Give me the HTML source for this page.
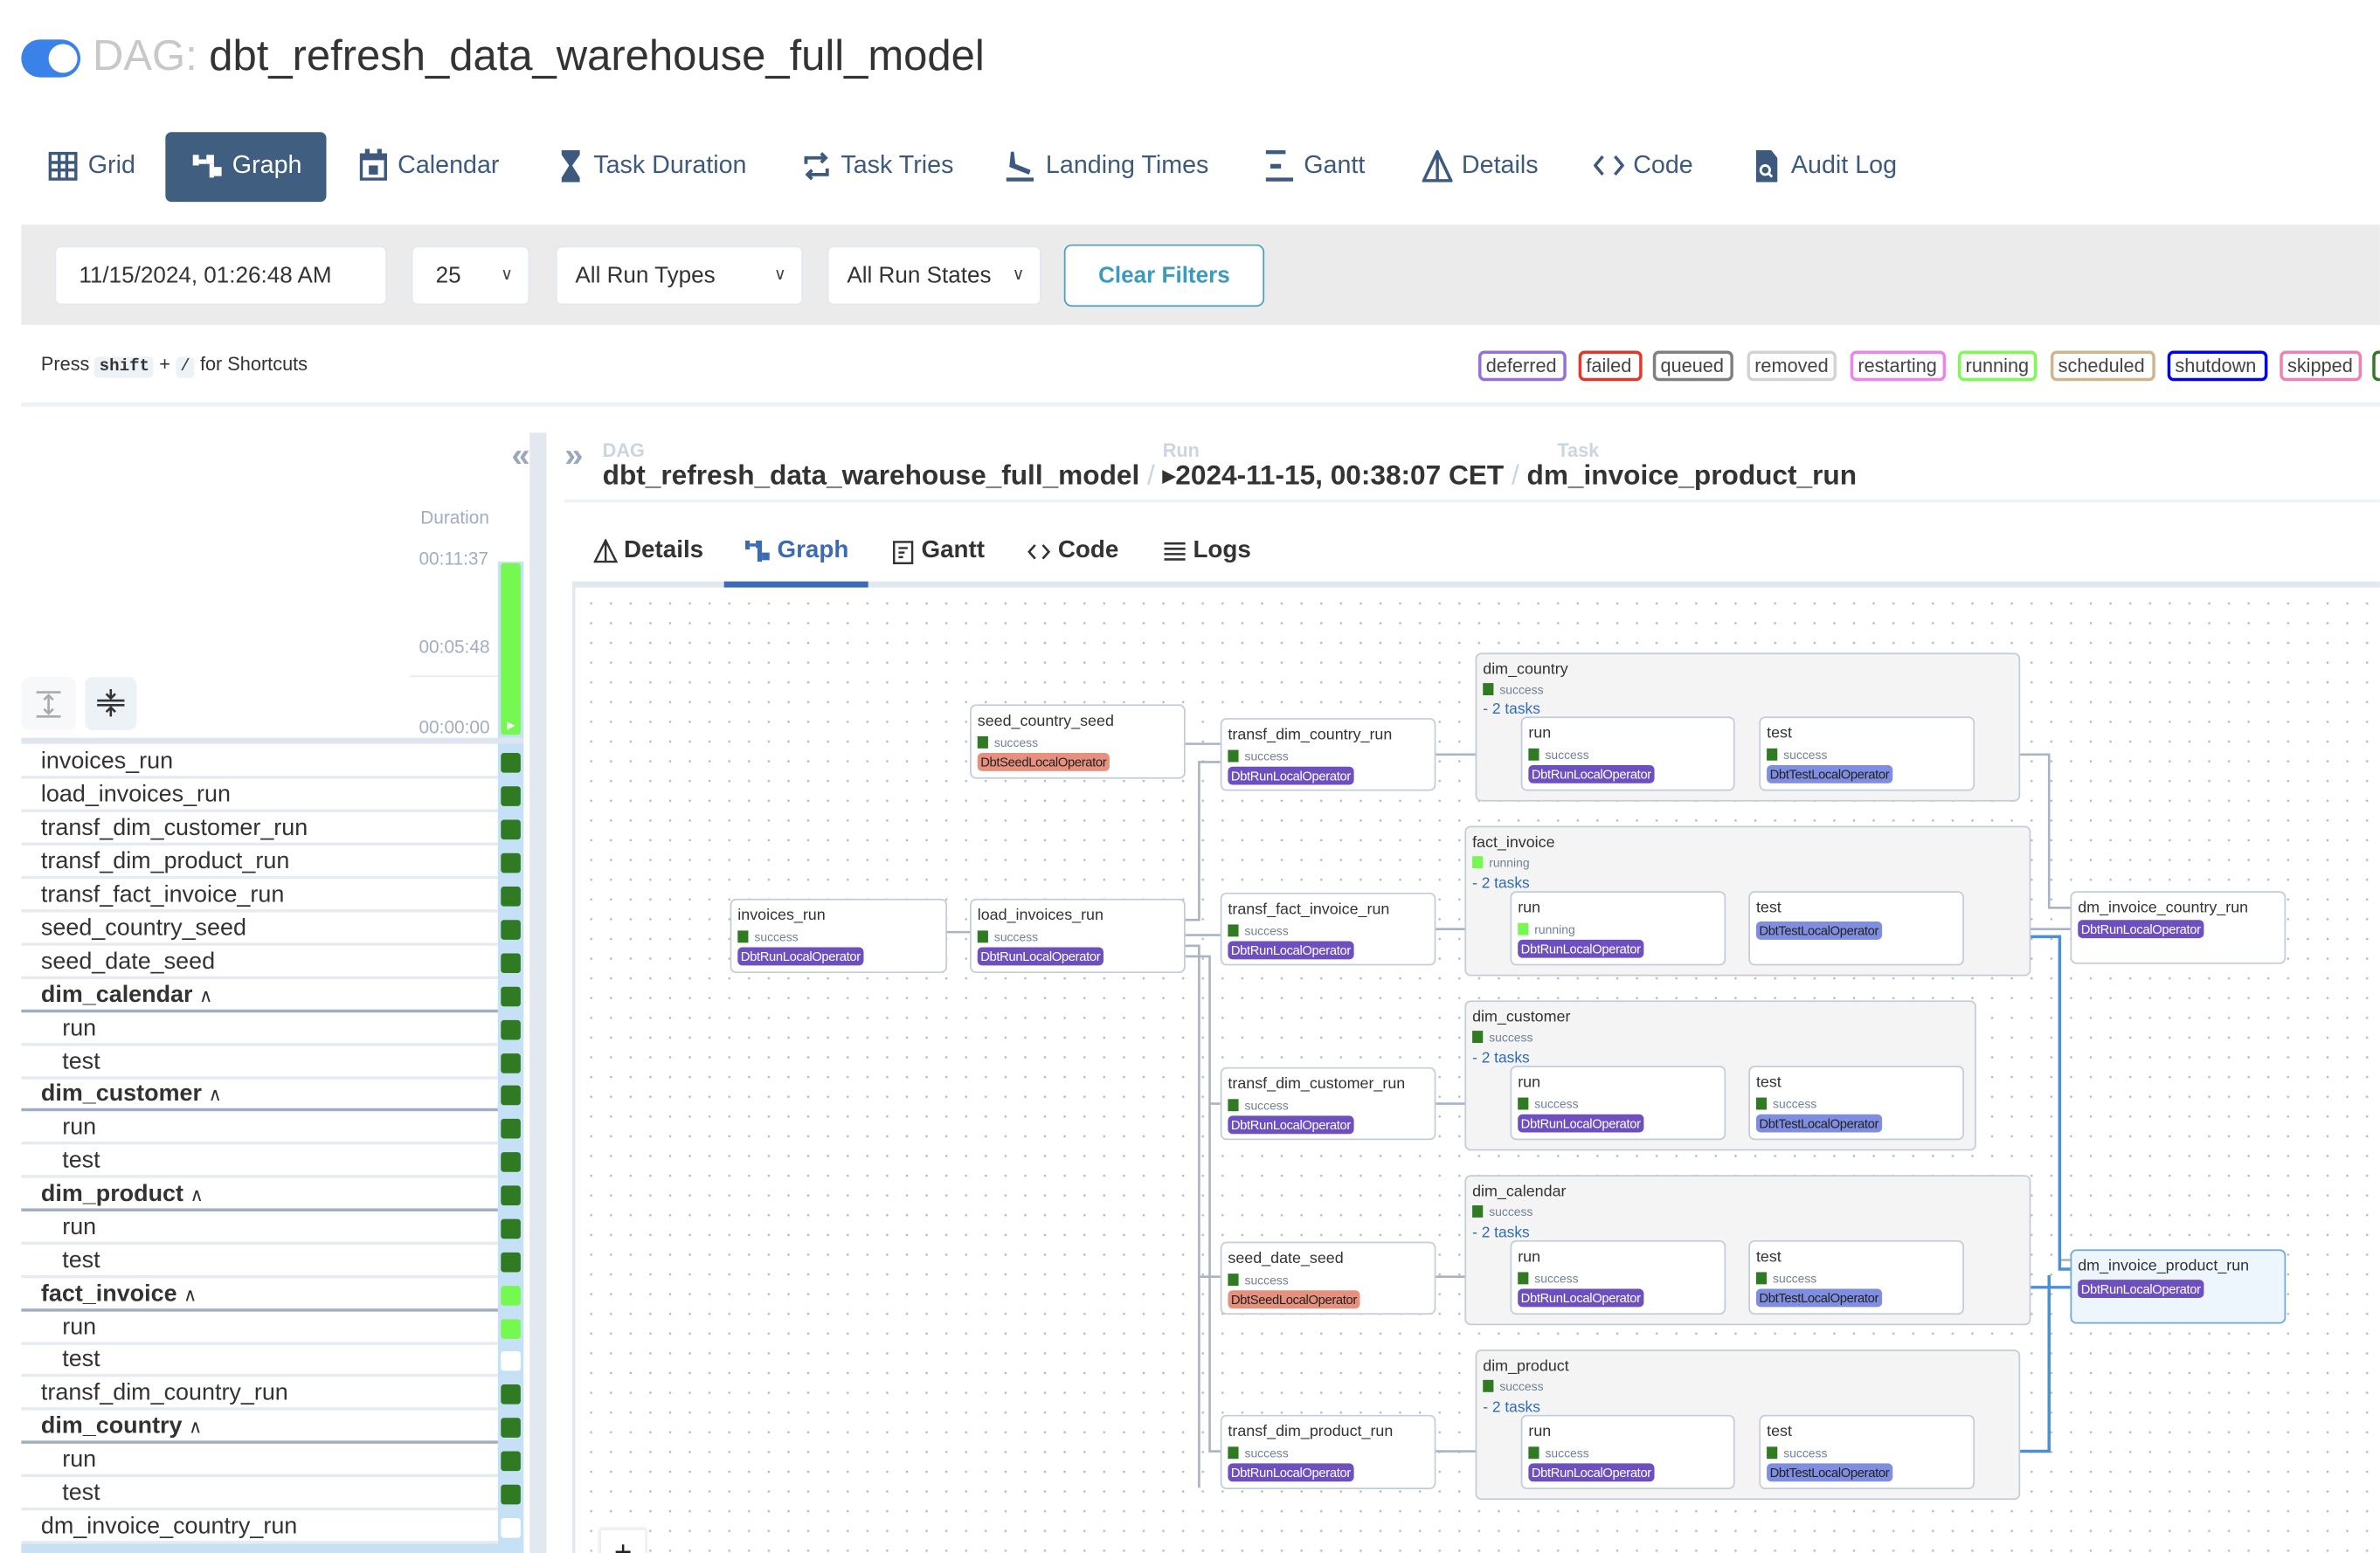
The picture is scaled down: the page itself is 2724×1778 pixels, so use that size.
<!DOCTYPE html>
<html><head><meta charset="utf-8">
<style>
*{box-sizing:border-box;margin:0;padding:0}
html,body{width:2724px;height:1778px;overflow:hidden;background:#fff;font-family:"Liberation Sans",Arial,sans-serif;color:#333}
#s{position:absolute;left:0;top:0;width:1568px;height:1023px;transform:scale(1.7372,1.738);transform-origin:0 0;overflow:hidden}
.a{position:absolute;white-space:nowrap}
.nav{color:#3d5a7e;font-size:16.5px}
.inp{position:absolute;top:162px;height:39px;background:#fff;border:1px solid #e2e8f0;border-radius:4px;font-size:15px;color:#333;line-height:37px;padding-left:15px}
.chev{position:absolute;right:10px;top:0;font-size:11px;color:#444}
.lg{position:absolute;top:231px;height:20px;border:2px solid;border-radius:4px;font-size:12.5px;color:#444;line-height:16px;padding:0 3px;background:#fff}
.row{position:absolute;left:14px;width:314px;height:22px;border-bottom:2px solid #e6ebf1;font-size:15.5px;line-height:21px;color:#333}
.row.b{font-weight:bold;border-bottom:2px solid #a0aec0}
.sq{position:absolute;left:330px;width:13px;height:13px;border-radius:2px;background:#2f7a22}
.n{position:absolute;background:#fff;border:1px solid #c3ccd8;border-radius:4px}
.g{position:absolute;background:#f4f4f4;border:1px solid #c3ccd8;border-radius:4px}
.nm{position:absolute;left:4px;top:5px;font-size:10.3px;color:#333}
.st{position:absolute;left:4px;font-size:8px;color:#718096}
.st i{display:inline-block;width:7px;height:8px;background:#2f7a22;margin-right:4px;vertical-align:-1px}
.bd{position:absolute;left:4px;height:12px;line-height:12px;font-size:8.5px;color:#fff;background:#6d4fbf;border-radius:3px;padding:0 2px;letter-spacing:-.2px}
.bd.t{background:#7f8ee0;color:#222}
.bd.s{background:#e8907e;color:#222}
.tk{position:absolute;left:4px;font-size:10px;color:#2f6bb5}
.tab{position:absolute;top:354px;font-size:16px;font-weight:bold;color:#333}
</style></head><body><div id="s">
<!-- header -->
<div class="a" style="left:14px;top:26px;width:39px;height:25px;border-radius:13px;background:#3b82e8"></div>
<div class="a" style="left:32px;top:29px;width:19px;height:19px;border-radius:50%;background:#fff"></div>
<div class="a" style="left:61px;top:20px;font-size:28.2px;color:#333"><span style="color:#c8c8c8">DAG:</span> dbt_refresh_data_warehouse_full_model</div>

<div class="a" style="left:109px;top:87px;width:106px;height:46px;background:#3f5e80;border-radius:4px"></div>
<svg class="a" style="left:32px;top:100px" width="19" height="19" viewBox="0 0 19 19" fill="none" stroke="#3d5a7e" stroke-width="2"><rect x="1" y="1" width="17" height="17"/><path d="M7 1v17M12 1v17M1 7h17M1 12h17"/></svg>
<div class="a nav" style="left:58px;top:100px">Grid</div>
<svg class="a" style="left:127px;top:100px" width="20" height="19" viewBox="0 0 20 19" fill="#fff"><rect x="0" y="2" width="4" height="7"/><rect x="4" y="5" width="5" height="3"/><rect x="9" y="2" width="5" height="6"/><rect x="11" y="8" width="3" height="9"/><rect x="14" y="10" width="5" height="6"/></svg>
<div class="a nav" style="left:153px;top:100px;color:#fff">Graph</div>
<svg class="a" style="left:237px;top:98px" width="18" height="21" viewBox="0 0 18 21" fill="none" stroke="#3d5a7e" stroke-width="2"><rect x="1" y="4" width="16" height="16"/><path d="M1 6h16M5 0v5M13 0v5" stroke-width="3"/><rect x="7" y="12" width="4" height="4" fill="#3d5a7e"/></svg>
<div class="a nav" style="left:262px;top:100px">Calendar</div>
<svg class="a" style="left:369px;top:99px" width="14" height="21" viewBox="0 0 14 21" fill="#3d5a7e"><path d="M1 0h12v3L8 10l5 8v3H1v-3l5-8L1 3z"/></svg>
<div class="a nav" style="left:391px;top:100px">Task Duration</div>
<svg class="a" style="left:529px;top:99px" width="18" height="21" viewBox="0 0 18 21" fill="none" stroke="#3d5a7e" stroke-width="2.2"><path d="M2 9V5h13M12 2l3 3-3 3M16 12v4H3M6 13l-3 3 3 3"/></svg>
<div class="a nav" style="left:554px;top:100px">Task Tries</div>
<svg class="a" style="left:662px;top:99px" width="20" height="21" viewBox="0 0 20 21" fill="#3d5a7e"><path d="M4 1l2 0 1 8 10 4-1 3L3 11z"/><rect x="1" y="18" width="18" height="2.5"/></svg>
<div class="a nav" style="left:689px;top:100px">Landing Times</div>
<svg class="a" style="left:833px;top:99px" width="20" height="21" viewBox="0 0 20 21" fill="#3d5a7e"><rect x="1" y="0" width="13" height="2.5"/><rect x="4" y="9" width="7" height="3"/><rect x="1" y="18" width="18" height="2.5"/></svg>
<div class="a nav" style="left:859px;top:100px">Gantt</div>
<svg class="a" style="left:937px;top:99px" width="20" height="21" viewBox="0 0 20 21" fill="none" stroke="#3d5a7e" stroke-width="2"><path d="M10 1L1 20h18zM10 1v19"/></svg>
<div class="a nav" style="left:963px;top:100px">Details</div>
<svg class="a" style="left:1050px;top:101px" width="20" height="16" viewBox="0 0 20 16" fill="none" stroke="#3d5a7e" stroke-width="2"><path d="M6 2L1 8l5 6M14 2l5 6-5 6"/></svg>
<div class="a nav" style="left:1076px;top:100px">Code</div>
<svg class="a" style="left:1156px;top:99px" width="16" height="21" viewBox="0 0 16 21"><path d="M1 0h10l4 5v16H1z" fill="#3d5a7e"/><circle cx="7" cy="13" r="3" fill="none" stroke="#fff" stroke-width="1.6"/><path d="M9 15l2.5 2.5" stroke="#fff" stroke-width="1.6"/></svg>
<div class="a nav" style="left:1180px;top:100px">Audit Log</div>

<!-- filter bar -->
<div class="a" style="left:14px;top:148px;width:1554px;height:66px;background:#ebebeb"></div>
<div class="inp" style="left:36px;width:219px">11/15/2024, 01:26:48 AM</div>
<div class="inp" style="left:271px;width:78px">25<span class="chev">&#x2228;</span></div>
<div class="inp" style="left:366px;width:163px;padding-left:12px">All Run Types<span class="chev">&#x2228;</span></div>
<div class="inp" style="left:545px;width:141px;padding-left:12px">All Run States<span class="chev">&#x2228;</span></div>
<div class="a" style="left:701px;top:161px;width:132px;height:41px;border:1.5px solid #4aa0c0;border-radius:5px;background:#fff;color:#3a9ac0;font-weight:bold;font-size:15px;line-height:40px;text-align:center">Clear Filters</div>

<div class="a" style="left:27px;top:233px;font-size:12.5px;color:#333">Press <span style="background:#edf2f7;border-radius:3px;padding:1px 3px;font-family:'Liberation Mono',monospace;font-size:11px;font-weight:bold">shift</span> + <span style="background:#edf2f7;border-radius:3px;padding:1px 3px;font-family:'Liberation Mono',monospace;font-size:11px">/</span> for Shortcuts</div>
<div class="lg" style="left:974px;width:58px;border-color:#9370db">deferred</div>
<div class="lg" style="left:1040px;width:42px;border-color:#e8352a">failed</div>
<div class="lg" style="left:1089px;width:53px;border-color:#808080">queued</div>
<div class="lg" style="left:1151px;width:59px;border-color:#d3d3d3">removed</div>
<div class="lg" style="left:1219px;width:63px;border-color:#ee82ee">restarting</div>
<div class="lg" style="left:1290px;width:52px;border-color:#7cfc50">running</div>
<div class="lg" style="left:1351px;width:69px;border-color:#d2b48c">scheduled</div>
<div class="lg" style="left:1428px;width:66px;border-color:#0000ff">shutdown</div>
<div class="lg" style="left:1502px;width:54px;border-color:#f080b0">skipped</div>
<div class="lg" style="left:1563px;width:20px;border-color:#2f7a22"></div>
<div class="a" style="left:14px;top:265px;width:1554px;height:3px;background:#edf2f7"></div>

<!-- left panel -->
<div class="a" style="left:337px;top:287px;font-size:22px;color:#9aa8bc;font-weight:bold">&laquo;</div>
<div class="a" style="left:277px;top:334px;font-size:12px;color:#a0aec0">Duration</div>
<div class="a" style="left:276px;top:361px;font-size:12px;color:#a0aec0">00:11:37</div>
<div class="a" style="left:276px;top:419px;font-size:12px;color:#a0aec0">00:05:48</div>
<div class="a" style="left:276px;top:472px;font-size:12px;color:#a0aec0">00:00:00</div>
<div class="a" style="left:270px;top:445px;width:58px;height:1px;background:#e6ebf1"></div>
<div class="a" style="left:328px;top:370px;width:17px;height:653px;background:#c6e0f5"></div>
<div class="a" style="left:330px;top:371px;width:13px;height:113px;background:#75f84f;border-radius:2px"></div>
<div class="a" style="left:334px;top:474px;font-size:7px;color:#fff">&#9654;</div>
<div class="a" style="left:14px;top:446px;width:36px;height:35px;background:#f6f8fa;border-radius:5px"></div>
<svg class="a" style="left:23px;top:455px" width="18" height="18" viewBox="0 0 18 18" stroke="#aaa" stroke-width="1.5" fill="none"><path d="M1 1h16M1 17h16M9 3v12M6 6l3-3 3 3M6 12l3 3 3-3"/></svg>
<div class="a" style="left:56px;top:446px;width:34px;height:35px;background:#edf2f7;border-radius:5px"></div>
<svg class="a" style="left:63px;top:453px" width="20" height="20" viewBox="0 0 20 20" stroke="#333" stroke-width="1.5" fill="none"><path d="M1 8.5h18M1 11.5h18M10 1v6M7 4l3 3 3-3M10 19v-6M7 16l3-3 3 3"/></svg>
<div class="a" style="left:14px;top:486px;width:331px;height:4px;background:#dde5ee"></div>

<div class="row" style="top:491px;padding-left:13px">invoices_run</div><div class="sq" style="top:496px"></div>
<div class="row" style="top:513px;padding-left:13px">load_invoices_run</div><div class="sq" style="top:518px"></div>
<div class="row" style="top:535px;padding-left:13px">transf_dim_customer_run</div><div class="sq" style="top:540px"></div>
<div class="row" style="top:557px;padding-left:13px">transf_dim_product_run</div><div class="sq" style="top:562px"></div>
<div class="row" style="top:579px;padding-left:13px">transf_fact_invoice_run</div><div class="sq" style="top:584px"></div>
<div class="row" style="top:601px;padding-left:13px">seed_country_seed</div><div class="sq" style="top:606px"></div>
<div class="row" style="top:623px;padding-left:13px">seed_date_seed</div><div class="sq" style="top:628px"></div>
<div class="row b" style="top:645px;padding-left:13px">dim_calendar <span style="font-weight:normal;font-size:12px">&#x2227;</span></div><div class="sq" style="top:650px"></div>
<div class="row" style="top:667px;padding-left:27px">run</div><div class="sq" style="top:672px"></div>
<div class="row" style="top:689px;padding-left:27px">test</div><div class="sq" style="top:694px"></div>
<div class="row b" style="top:710px;padding-left:13px">dim_customer <span style="font-weight:normal;font-size:12px">&#x2227;</span></div><div class="sq" style="top:715px"></div>
<div class="row" style="top:732px;padding-left:27px">run</div><div class="sq" style="top:737px"></div>
<div class="row" style="top:754px;padding-left:27px">test</div><div class="sq" style="top:759px"></div>
<div class="row b" style="top:776px;padding-left:13px">dim_product <span style="font-weight:normal;font-size:12px">&#x2227;</span></div><div class="sq" style="top:781px"></div>
<div class="row" style="top:798px;padding-left:27px">run</div><div class="sq" style="top:803px"></div>
<div class="row" style="top:820px;padding-left:27px">test</div><div class="sq" style="top:825px"></div>
<div class="row b" style="top:842px;padding-left:13px">fact_invoice <span style="font-weight:normal;font-size:12px">&#x2227;</span></div><div class="sq" style="top:847px;background:#75f84f"></div>
<div class="row" style="top:864px;padding-left:27px">run</div><div class="sq" style="top:869px;background:#75f84f"></div>
<div class="row" style="top:885px;padding-left:27px">test</div><div class="sq" style="top:890px;background:#fff"></div>
<div class="row" style="top:907px;padding-left:13px">transf_dim_country_run</div><div class="sq" style="top:912px"></div>
<div class="row b" style="top:929px;padding-left:13px">dim_country <span style="font-weight:normal;font-size:12px">&#x2227;</span></div><div class="sq" style="top:934px"></div>
<div class="row" style="top:951px;padding-left:27px">run</div><div class="sq" style="top:956px"></div>
<div class="row" style="top:973px;padding-left:27px">test</div><div class="sq" style="top:978px"></div>
<div class="row" style="top:995px;padding-left:13px">dm_invoice_country_run</div><div class="sq" style="top:1000px;background:#fff"></div>
<div class="a" style="left:14px;top:1017px;width:331px;height:10px;background:#c6e0f5"></div>

<div class="a" style="left:349px;top:285px;width:11px;height:738px;background:#e2e8f0"></div>

<!-- right header -->
<div class="a" style="left:372px;top:287px;font-size:22px;color:#9aa8bc;font-weight:bold">&raquo;</div>
<div class="a" style="left:397px;top:290px;font-size:12.5px;color:#cbd5e0;font-weight:bold">DAG</div>
<div class="a" style="left:766px;top:290px;font-size:12.5px;color:#cbd5e0;font-weight:bold">Run</div>
<div class="a" style="left:1026px;top:290px;font-size:12.5px;color:#cbd5e0;font-weight:bold">Task</div>
<div class="a" style="left:397px;top:303px;font-size:18.2px;font-weight:bold;color:#333">dbt_refresh_data_warehouse_full_model <span style="color:#cbd5e0;font-weight:normal">/</span> <span style="font-size:11px;vertical-align:2px">&#9654;</span>2024-11-15, 00:38:07 CET <span style="color:#cbd5e0;font-weight:normal">/</span> dm_invoice_product_run</div>
<div class="a" style="left:372px;top:329px;width:1196px;height:2px;background:#edf2f7"></div>

<svg class="a" style="left:391px;top:355px" width="16" height="16" viewBox="0 0 16 16" fill="none" stroke="#333" stroke-width="1.4"><path d="M8 1L1 15h14zM8 1v14"/></svg>
<div class="tab" style="left:411px">Details</div>
<svg class="a" style="left:491px;top:356px" width="17" height="15" viewBox="0 0 17 15" fill="#3b6bb5"><rect x="0" y="0" width="3" height="6"/><rect x="3" y="2" width="4" height="2"/><rect x="7" y="0" width="4" height="5"/><rect x="8" y="5" width="3" height="9"/><rect x="11" y="8" width="5" height="5"/></svg>
<div class="tab" style="left:512px;color:#3b6bb5">Graph</div>
<svg class="a" style="left:588px;top:356px" width="14" height="16" viewBox="0 0 14 16" fill="none" stroke="#333" stroke-width="1.4"><rect x="1" y="1" width="12" height="14"/><path d="M4 5h6M4 8h4M4 11h3"/></svg>
<div class="tab" style="left:607px">Gantt</div>
<svg class="a" style="left:677px;top:358px" width="15" height="11" viewBox="0 0 15 11" fill="none" stroke="#333" stroke-width="1.5"><path d="M5 1L1 5.5 5 10M10 1l4 4.5-4 4.5"/></svg>
<div class="tab" style="left:697px">Code</div>
<svg class="a" style="left:767px;top:357px" width="14" height="13" viewBox="0 0 14 13" stroke="#333" stroke-width="1.5"><path d="M0 1h14M0 4.5h14M0 8h14M0 11.5h14"/></svg>
<div class="tab" style="left:786px">Logs</div>
<div class="a" style="left:377px;top:383px;width:1191px;height:4px;background:#e2e8f0"></div>
<div class="a" style="left:477px;top:383px;width:95px;height:4px;background:#3b6bb5"></div>

<!-- canvas -->
<div class="a" style="left:377px;top:387px;width:1191px;height:636px;border-left:2px solid #e2e8f0;background-image:radial-gradient(circle,#b8b8b8 0.6px,transparent 0.9px);background-size:13px 13px;background-position:4px 4px"></div>

<svg class="a" style="left:0;top:0" width="1568" height="1023" fill="none">
<g stroke="#a8b4c4" stroke-width="1.5">
<path d="M624 614H639"/>
<path d="M781 490H804"/>
<path d="M781 606H790V502H804"/>
<path d="M781 616H804"/>
<path d="M781 623H790V980"/>
<path d="M781 630H797V727H804M797 727V956H804"/>
<path d="M790 841H804"/>
<path d="M946 497H1002M1143 497H1159M1301 497H1350V598H1364"/>
<path d="M946 612H995M1137 612H1152M1294 612H1364"/>
<path d="M946 727H995M1137 727H1152"/>
<path d="M946 841H995M1137 841H1152M1294 841H1320"/>
<path d="M946 956H1002M1143 956H1159"/>
<path d="M1357 620V830H1364"/>
</g>
<g stroke="#4a90d9" stroke-width="2">
<path d="M1313 612H1325V617H1357V836H1364"/>
<path d="M1313 841H1325V848H1364"/>
<path d="M1301 956H1350V840"/>
</g>
<g fill="#a8b4c4">
<circle cx="984" cy="497" r="3.5"/><circle cx="1321" cy="497" r="3.5"/>
<circle cx="976" cy="612" r="3.5"/><circle cx="1313" cy="612" r="3.5"/>
<circle cx="976" cy="727" r="3.5"/>
<circle cx="976" cy="841" r="3.5"/><circle cx="1313" cy="841" r="3.5"/>
<circle cx="984" cy="956" r="3.5"/><circle cx="1321" cy="956" r="3.5"/>
</g>
</svg>

<!-- groups -->
<div class="g" style="left:972px;top:430px;width:359px;height:98px"><div class="nm">dim_country</div><div class="st" style="top:19px"><i></i>success</div><div class="tk" style="top:31px">- 2 tasks</div></div>
<div class="g" style="left:965px;top:544px;width:373px;height:99px"><div class="nm">fact_invoice</div><div class="st" style="top:19px"><i style="background:#75f84f"></i>running</div><div class="tk" style="top:32px">- 2 tasks</div></div>
<div class="g" style="left:965px;top:659px;width:337px;height:99px"><div class="nm">dim_customer</div><div class="st" style="top:19px"><i></i>success</div><div class="tk" style="top:32px">- 2 tasks</div></div>
<div class="g" style="left:965px;top:774px;width:373px;height:99px"><div class="nm">dim_calendar</div><div class="st" style="top:19px"><i></i>success</div><div class="tk" style="top:32px">- 2 tasks</div></div>
<div class="g" style="left:972px;top:889px;width:359px;height:99px"><div class="nm">dim_product</div><div class="st" style="top:19px"><i></i>success</div><div class="tk" style="top:32px">- 2 tasks</div></div>

<!-- nodes -->
<div class="n" style="left:639px;top:464px;width:142px;height:49px"><div class="nm">seed_country_seed</div><div class="st" style="top:20px"><i></i>success</div><div class="bd s" style="top:31px">DbtSeedLocalOperator</div></div>
<div class="n" style="left:804px;top:473px;width:142px;height:48px"><div class="nm">transf_dim_country_run</div><div class="st" style="top:20px"><i></i>success</div><div class="bd" style="top:31px">DbtRunLocalOperator</div></div>
<div class="n" style="left:1002px;top:472px;width:141px;height:49px"><div class="nm">run</div><div class="st" style="top:20px"><i></i>success</div><div class="bd" style="top:31px">DbtRunLocalOperator</div></div>
<div class="n" style="left:1159px;top:472px;width:142px;height:49px"><div class="nm">test</div><div class="st" style="top:20px"><i></i>success</div><div class="bd t" style="top:31px">DbtTestLocalOperator</div></div>

<div class="n" style="left:481px;top:592px;width:143px;height:49px"><div class="nm">invoices_run</div><div class="st" style="top:20px"><i></i>success</div><div class="bd" style="top:31px">DbtRunLocalOperator</div></div>
<div class="n" style="left:639px;top:592px;width:142px;height:49px"><div class="nm">load_invoices_run</div><div class="st" style="top:20px"><i></i>success</div><div class="bd" style="top:31px">DbtRunLocalOperator</div></div>
<div class="n" style="left:804px;top:588px;width:142px;height:48px"><div class="nm">transf_fact_invoice_run</div><div class="st" style="top:20px"><i></i>success</div><div class="bd" style="top:31px">DbtRunLocalOperator</div></div>
<div class="n" style="left:995px;top:587px;width:142px;height:49px"><div class="nm">run</div><div class="st" style="top:20px"><i style="background:#75f84f"></i>running</div><div class="bd" style="top:31px">DbtRunLocalOperator</div></div>
<div class="n" style="left:1152px;top:587px;width:142px;height:49px"><div class="nm">test</div><div class="bd t" style="top:19px">DbtTestLocalOperator</div></div>
<div class="n" style="left:1364px;top:587px;width:142px;height:48px"><div class="nm">dm_invoice_country_run</div><div class="bd" style="top:18px">DbtRunLocalOperator</div></div>

<div class="n" style="left:804px;top:703px;width:142px;height:48px"><div class="nm">transf_dim_customer_run</div><div class="st" style="top:20px"><i></i>success</div><div class="bd" style="top:31px">DbtRunLocalOperator</div></div>
<div class="n" style="left:995px;top:702px;width:142px;height:49px"><div class="nm">run</div><div class="st" style="top:20px"><i></i>success</div><div class="bd" style="top:31px">DbtRunLocalOperator</div></div>
<div class="n" style="left:1152px;top:702px;width:142px;height:49px"><div class="nm">test</div><div class="st" style="top:20px"><i></i>success</div><div class="bd t" style="top:31px">DbtTestLocalOperator</div></div>

<div class="n" style="left:804px;top:818px;width:142px;height:48px"><div class="nm">seed_date_seed</div><div class="st" style="top:20px"><i></i>success</div><div class="bd s" style="top:31px">DbtSeedLocalOperator</div></div>
<div class="n" style="left:995px;top:817px;width:142px;height:49px"><div class="nm">run</div><div class="st" style="top:20px"><i></i>success</div><div class="bd" style="top:31px">DbtRunLocalOperator</div></div>
<div class="n" style="left:1152px;top:817px;width:142px;height:49px"><div class="nm">test</div><div class="st" style="top:20px"><i></i>success</div><div class="bd t" style="top:31px">DbtTestLocalOperator</div></div>
<div class="n" style="left:1364px;top:823px;width:142px;height:49px;background:#eef6fd;border-color:#6fa8dc"><div class="nm">dm_invoice_product_run</div><div class="bd" style="top:19px">DbtRunLocalOperator</div></div>

<div class="n" style="left:804px;top:932px;width:142px;height:49px"><div class="nm">transf_dim_product_run</div><div class="st" style="top:20px"><i></i>success</div><div class="bd" style="top:31px">DbtRunLocalOperator</div></div>
<div class="n" style="left:1002px;top:932px;width:141px;height:49px"><div class="nm">run</div><div class="st" style="top:20px"><i></i>success</div><div class="bd" style="top:31px">DbtRunLocalOperator</div></div>
<div class="n" style="left:1159px;top:932px;width:142px;height:49px"><div class="nm">test</div><div class="st" style="top:20px"><i></i>success</div><div class="bd t" style="top:31px">DbtTestLocalOperator</div></div>

<div class="a" style="left:395px;top:1007px;width:31px;height:30px;background:#fff;border:1px solid #eee;box-shadow:0 0 2px rgba(0,0,0,.15);font-size:20px;line-height:30px;text-align:center;color:#222">+</div>
</div></body></html>
